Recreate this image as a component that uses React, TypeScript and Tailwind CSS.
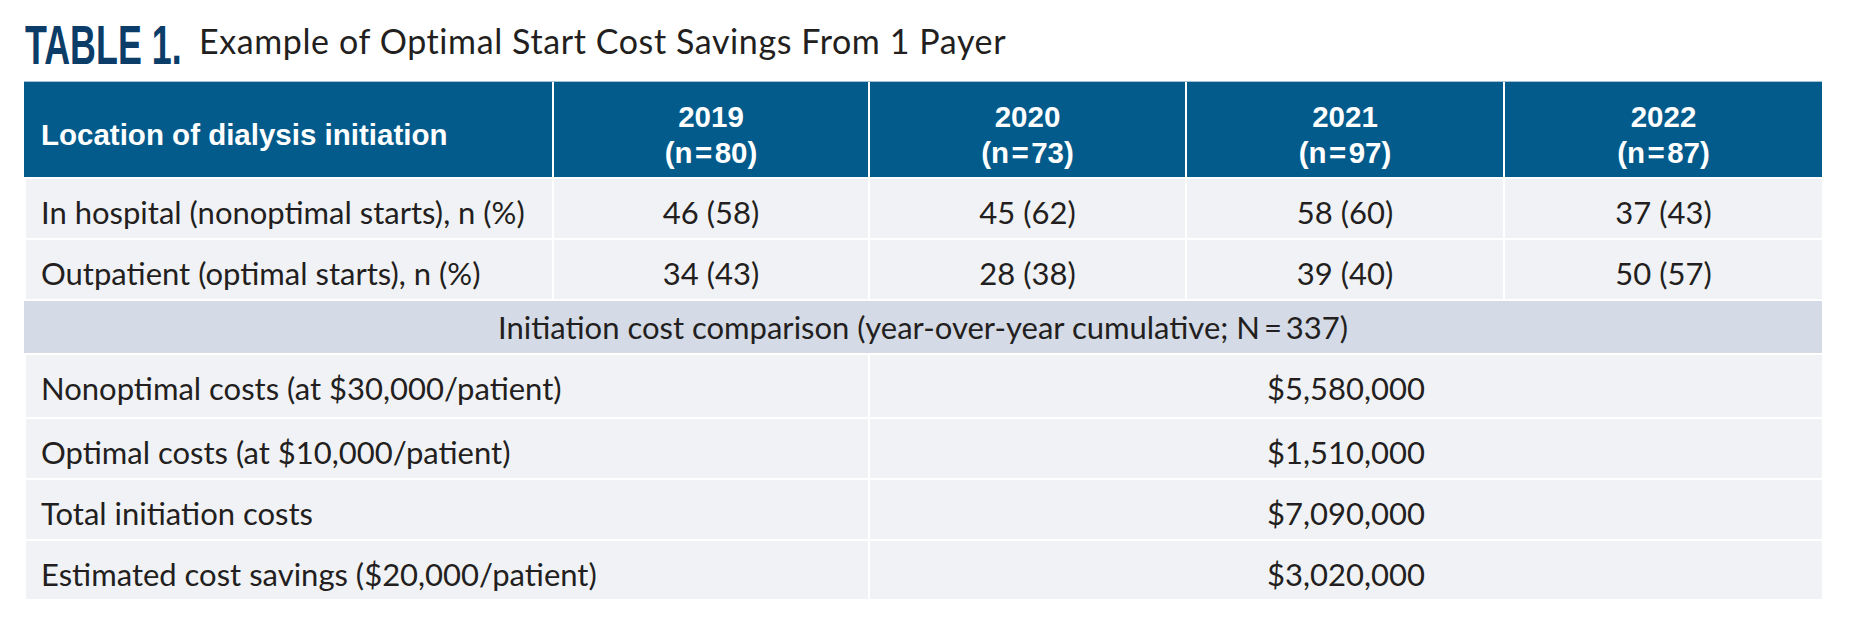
const years = [
  { year: "2019", n: "80" },
  { year: "2020", n: "73" },
  { year: "2021", n: "97" },
  { year: "2022", n: "87" },
];

const starts = [
  ["In hospital (nonoptimal starts), n (%)", "46 (58)", "45 (62)", "58 (60)", "37 (43)"],
  ["Outpatient (optimal starts), n (%)", "34 (43)", "28 (38)", "39 (40)", "50 (57)"],
];

const costs = [
  ["Nonoptimal costs (at $30,000/patient)", "$5,580,000"],
  ["Optimal costs (at $10,000/patient)", "$1,510,000"],
  ["Total initiation costs", "$7,090,000"],
  ["Estimated cost savings ($20,000/patient)", "$3,020,000"],
];

export default function App() {
  return (
    <div className="w-[1852px] h-[630px] bg-white pl-[24px] pt-[17px] text-[#231f20] font-['Lato',sans-serif]">
      {/* caption */}
      <div className="flex items-start h-[55px]">
        <div className="w-[157px] h-[55px] pl-[1px]">
          <span className="inline-block origin-left scale-x-[0.64] whitespace-nowrap font-['Liberation_Sans',sans-serif] font-bold text-[56px] leading-[55px] text-[#0b3d68]">
            TABLE 1.
          </span>
        </div>
        <div className="ml-[18px] mt-[7px] text-[34px] leading-[34px] tracking-[0.6px] whitespace-nowrap">
          Example of Optimal Start Cost Savings From 1 Payer
        </div>
      </div>

      <div className="mt-[9px] w-[1798px] grid grid-cols-[528px_314px_315px_316px_317px] grid-rows-[95px_59px_59px_52px_62px_59px_59px_58px] gap-[2px] bg-white border-t border-[#a3c0d6]">
        <div className="bg-[#035b8c] text-white font-['Liberation_Sans',sans-serif] font-bold text-[29.5px] leading-[30px] pl-[17px] pt-[38px] whitespace-nowrap">
          Location of dialysis initiation
        </div>
        {years.map((y) => (
          <div
            key={y.year}
            className="bg-[#035b8c] text-white font-['Liberation_Sans',sans-serif] font-bold text-[29.5px] leading-[36px] pt-[17px] text-center"
          >
            <div>{y.year}</div>
            <div>(n{"\u200a"}={"\u200a"}{y.n})</div>
          </div>
        ))}

        {starts.map((row) =>
          row.map((cell, i) => (
            <div
              key={row[0] + i}
              className={
                i === 0
                  ? "ml-[2px] bg-[#f1f2f6] text-[31px] leading-[30px] pt-[18px] pl-[15px] whitespace-nowrap"
                  : "bg-[#f1f2f6] text-[31px] leading-[30px] pt-[18px] text-center"
              }
            >
              {cell}
            </div>
          ))
        )}

        <div className="col-span-5 bg-[#d4dae6] text-[31px] leading-[30px] pt-[11px] text-center">
          Initiation cost comparison (year-over-year cumulative; N{"\u2009"}={"\u2009"}337)
        </div>

        {costs.map(([label, value]) => (
          <div key={label} className="contents">
            <div className="col-span-2 ml-[2px] bg-[#f1f2f6] text-[31px] leading-[30px] pt-[18px] pl-[15px] whitespace-nowrap">
              {label}
            </div>
            <div className="col-span-3 bg-[#f1f2f6] text-[31px] leading-[30px] pt-[18px] text-center">
              {value}
            </div>
          </div>
        ))}
      </div>
    </div>
  );
}
